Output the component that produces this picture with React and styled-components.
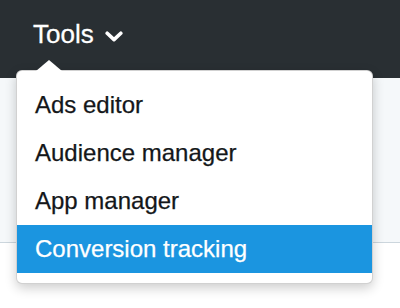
import React from "react";
import styled, { createGlobalStyle } from "styled-components";

const Global = createGlobalStyle`
  html, body { margin: 0; padding: 0; background: #ffffff; }
  body { font-family: "Liberation Sans", Arial, Helvetica, sans-serif; }
`;

const Page = styled.div`
  position: relative;
  width: 400px;
  height: 308px;
  overflow: hidden;
  background: #ffffff;
`;

const Header = styled.header`
  height: 78px;
  background: #292f33;
  display: flex;
  align-items: center;
  padding-left: 33px;
  box-sizing: border-box;
`;

const NavButton = styled.div`
  display: flex;
  align-items: center;
  gap: 11px;
  color: #ffffff;
  font-size: 26px;
  line-height: 1;
  padding-bottom: 10px;
  -webkit-text-stroke: 0.3px #ffffff;
`;

const Band = styled.div`
  height: 164px;
  background: #f5f8fa;
  border-bottom: 1px solid #ccd6dd;
`;

const Menu = styled.ul`
  position: absolute;
  left: 16px;
  top: 70px;
  width: 357px;
  margin: 0;
  padding: 10px 0;
  list-style: none;
  box-sizing: border-box;
  background: #ffffff;
  border: 1px solid rgba(0, 0, 0, 0.18);
  border-radius: 6px;
  box-shadow: 0 4px 12px rgba(0, 0, 0, 0.2);

  &::before {
    content: "";
    position: absolute;
    left: 19px;
    top: -11px;
    border-left: 13px solid transparent;
    border-right: 13px solid transparent;
    border-bottom: 11px solid #ffffff;
  }
`;

const Item = styled.li`
  height: 48px;
  display: flex;
  align-items: center;
  padding-left: 18px;
  font-size: 24px;
  color: ${(p) => (p.$active ? "#ffffff" : "#14171a")};
  background: ${(p) => (p.$active ? "#1b95e0" : "transparent")};
  -webkit-text-stroke: 0.25px ${(p) => (p.$active ? "#ffffff" : "#14171a")};
`;

const Chevron = () => (
  <svg width="18" height="11" viewBox="0 0 18 11" style={{ marginTop: 4 }}>
    <path d="M2.2 2.2 L9 8.6 L15.8 2.2" fill="none" stroke="#fff" strokeWidth="3.6" strokeLinecap="round" strokeLinejoin="round" />
  </svg>
);

const items = ["Ads editor", "Audience manager", "App manager", "Conversion tracking"];

export default function App() {
  return (
    <>
      <Global />
      <Page>
        <Header>
          <NavButton>
            Tools
            <Chevron />
          </NavButton>
        </Header>
        <Band />
        <Menu>
          {items.map((t, i) => (
            <Item key={t} $active={i === 3}>{t}</Item>
          ))}
        </Menu>
      </Page>
    </>
  );
}
